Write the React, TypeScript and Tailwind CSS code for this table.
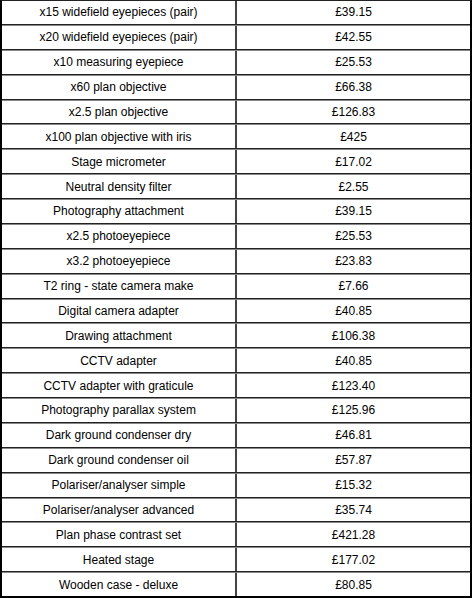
const items: [string, string][] = [
  ["x15 widefield eyepieces (pair)", "£39.15"],
  ["x20 widefield eyepieces (pair)", "£42.55"],
  ["x10 measuring eyepiece", "£25.53"],
  ["x60 plan objective", "£66.38"],
  ["x2.5 plan objective", "£126.83"],
  ["x100 plan objective with iris", "£425"],
  ["Stage micrometer", "£17.02"],
  ["Neutral density filter", "£2.55"],
  ["Photography attachment", "£39.15"],
  ["x2.5 photoeyepiece", "£25.53"],
  ["x3.2 photoeyepiece", "£23.83"],
  ["T2 ring - state camera make", "£7.66"],
  ["Digital camera adapter", "£40.85"],
  ["Drawing attachment", "£106.38"],
  ["CCTV adapter", "£40.85"],
  ["CCTV adapter with graticule", "£123.40"],
  ["Photography parallax system", "£125.96"],
  ["Dark ground condenser dry", "£46.81"],
  ["Dark ground condenser oil", "£57.87"],
  ["Polariser/analyser simple", "£15.32"],
  ["Polariser/analyser advanced", "£35.74"],
  ["Plan phase contrast set", "£421.28"],
  ["Heated stage", "£177.02"],
  ["Wooden case - deluxe", "£80.85"],
];

const App = () => {
  return (
    <div className="w-[472px] h-[598px] bg-white flex flex-col border-t border-l-2 border-r-2 border-b-2 border-t-[#222] border-x-black border-b-black font-['Liberation_Sans',Arial,sans-serif] text-[12px] text-black">
      {items.map(([name, price], i) => (
        <div
          key={name}
          className={
            i === 0
              ? "flex-1 flex border-b border-[#222]"
              : i === items.length - 1
              ? "flex-1 flex border-t border-[#888]"
              : "flex-1 flex border-t border-b border-t-[#888] border-b-[#222]"
          }
        >
          <div className="w-[235px] flex items-center justify-center border-r-2 border-[#444]">
            {name}
          </div>
          <div className="flex-1 flex items-center justify-center">{price}</div>
        </div>
      ))}
    </div>
  );
};

export default App;
